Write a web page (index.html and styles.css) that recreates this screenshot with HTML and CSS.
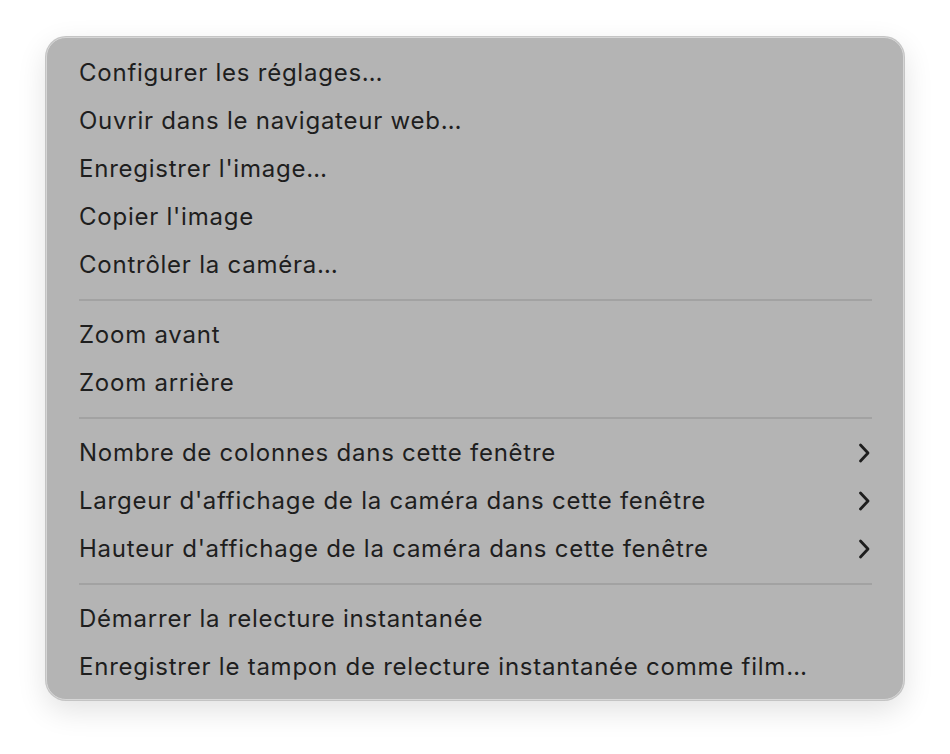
FILE: index.html
```html
<html>

<head>
    <meta http-equiv="Content-Type" content="text/html;charset=utf-8">
    <link rel="stylesheet" href="styles.css">
</head>

<body>
    <div id="menu">
        <div class="item">Configurer les réglages…</div>
        <div class="item">Ouvrir dans le navigateur web…</div>
        <div class="item">Enregistrer l'image…</div>
        <div class="item">Copier l'image</div>
        <div class="item">Contrôler la caméra…</div>
        <div class="sep"></div>
        <div class="item">Zoom avant</div>
        <div class="item">Zoom arrière</div>
        <div class="sep"></div>
        <div class="item sub">Nombre de colonnes dans cette fenêtre
            <svg class="chev" width="13" height="20" viewBox="0 0 13 20"><path d="M2.5 2 L10 10 L2.5 18"/></svg>
        </div>
        <div class="item sub">Largeur d'affichage de la caméra dans cette fenêtre
            <svg class="chev" width="13" height="20" viewBox="0 0 13 20"><path d="M2.5 2 L10 10 L2.5 18"/></svg>
        </div>
        <div class="item sub">Hauteur d'affichage de la caméra dans cette fenêtre
            <svg class="chev" width="13" height="20" viewBox="0 0 13 20"><path d="M2.5 2 L10 10 L2.5 18"/></svg>
        </div>
        <div class="sep"></div>
        <div class="item">Démarrer la relecture instantanée</div>
        <div class="item">Enregistrer le tampon de relecture instantanée comme film…</div>
    </div>
</body>

</html>
```

FILE: styles.css
```css
body {
    margin: 0;
    background-color: #fff;
    font-family: Inter, "Noto Sans", sans-serif;
}

#menu {
    width: 856px;
    margin: 37px 0 0 46px;
    padding: 11px 0 8px 0;
    background-color: #b4b4b4;
    border: 1px solid #d6d6d6;
    border-radius: 20px;
    box-shadow: 0 0 0 1px #c4c4c4, 0 10px 30px rgba(0, 0, 0, 0.12);
    color: #1e1e1e;
}

.item {
    height: 48px;
    line-height: 48px;
    padding: 0 32px 0 32px;
    font-size: 24px;
    letter-spacing: 0.76px;
    display: flex;
    align-items: center;
    justify-content: space-between;
}

.chev {
    fill: none;
    stroke: #1e1e1e;
    stroke-width: 2.8;
    stroke-linecap: round;
    stroke-linejoin: round;
}

.sep {
    height: 2px;
    margin: 10px 31px 10px 32px;
    background-color: #a2a2a2;
}
```
